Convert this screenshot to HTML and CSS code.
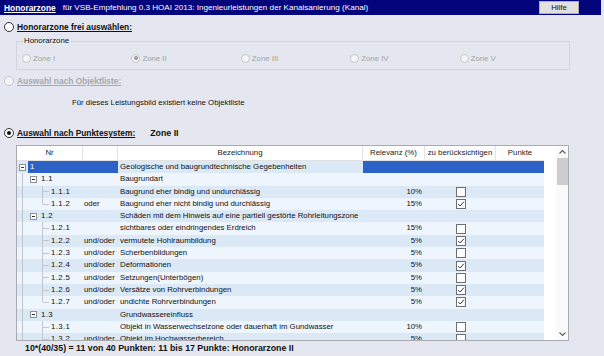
FILE: index.html
```html
<!DOCTYPE html>
<html lang="de">
<head>
    <meta charset="UTF-8">
    <title>Honorarzone</title>
    <link rel="stylesheet" href="styles.css">
</head>
<body>

<div class="titlebar">
    <span class="tb-title">Honorarzone</span>
    <span class="tb-sub">für VSB-Empfehlung 0.3 HOAI 2013: Ingenieurleistungen der Kanalsanierung (Kanal)</span>
    <button class="help">Hilfe</button>
</div>

<div class="opt opt-first">
    <span class="radio"></span>
    <span class="opt-label">Honorarzone frei auswählen:</span>
</div>

<fieldset class="group">
    <legend>Honorarzone</legend>
    <div class="zones">
        <div class="zone"><span class="radio small off"></span>Zone I</div>
        <div class="zone"><span class="radio small off on"></span>Zone II</div>
        <div class="zone"><span class="radio small off"></span>Zone III</div>
        <div class="zone"><span class="radio small off"></span>Zone IV</div>
        <div class="zone"><span class="radio small off"></span>Zone V</div>
    </div>
</fieldset>

<div class="opt opt-second">
    <span class="radio off"></span>
    <span class="opt-label disabled">Auswahl nach Objektliste:</span>
</div>

<p class="note">Für dieses Leistungsbild existiert keine Objektliste</p>

<div class="opt opt-third">
    <span class="radio on"></span>
    <span class="opt-label">Auswahl nach Punktesystem:</span>
    <span class="zone-result">Zone II</span>
</div>

<div class="grid">
    <div class="grid-main">
        <div class="grid-head">
            <div class="cell c-nr">Nr</div>
            <div class="cell c-rel"></div>
            <div class="cell c-bez">Bezeichnung</div>
            <div class="cell c-pct">Relevanz (%)</div>
            <div class="cell c-chk">zu berücksichtigen</div>
            <div class="cell c-pt">Punkte</div>
        </div>
        <div class="grid-body">
            <div class="row sel">
                <div class="c-nr"><span class="tbox first"></span><span class="lbl">1</span></div>
                <div class="c-rel"></div>
                <div class="c-bez">Geologische und baugrundtechnische Gegebenheiten</div>
                <div class="c-pct"></div><div class="c-chk"></div><div class="c-pt"></div>
            </div>
            <div class="row">
                <div class="c-nr"><span class="guide"></span><span class="tbox"></span><span class="lbl">1.1</span></div>
                <div class="c-rel"></div>
                <div class="c-bez">Baugrundart</div>
                <div class="c-pct"></div><div class="c-chk"></div><div class="c-pt"></div>
            </div>
            <div class="row">
                <div class="c-nr"><span class="guide"></span><span class="vline"></span><span class="tick"></span><span class="lbl">1.1.1</span></div>
                <div class="c-rel"></div>
                <div class="c-bez">Baugrund eher bindig und undurchlässig</div>
                <div class="c-pct">10%</div><div class="c-chk"><span class="cb"></span></div><div class="c-pt"></div>
            </div>
            <div class="row">
                <div class="c-nr"><span class="guide"></span><span class="vline last"></span><span class="tick"></span><span class="lbl">1.1.2</span></div>
                <div class="c-rel">oder</div>
                <div class="c-bez">Baugrund eher nicht bindig und durchlässig</div>
                <div class="c-pct">15%</div><div class="c-chk"><span class="cb"><svg viewBox="0 0 8 8"><path d="M1.2 4 L3.2 6 L7 1.6"/></svg></span></div><div class="c-pt"></div>
            </div>
            <div class="row">
                <div class="c-nr"><span class="guide"></span><span class="tbox"></span><span class="lbl">1.2</span></div>
                <div class="c-rel"></div>
                <div class="c-bez">Schäden mit dem Hinweis auf eine partiell gestörte Rohrleitungszone</div>
                <div class="c-pct"></div><div class="c-chk"></div><div class="c-pt"></div>
            </div>
            <div class="row">
                <div class="c-nr"><span class="guide"></span><span class="vline"></span><span class="tick"></span><span class="lbl">1.2.1</span></div>
                <div class="c-rel"></div>
                <div class="c-bez">sichtbares oder eindringendes Erdreich</div>
                <div class="c-pct">15%</div><div class="c-chk"><span class="cb"></span></div><div class="c-pt"></div>
            </div>
            <div class="row">
                <div class="c-nr"><span class="guide"></span><span class="vline"></span><span class="tick"></span><span class="lbl">1.2.2</span></div>
                <div class="c-rel">und/oder</div>
                <div class="c-bez">vermutete Hohlraumbildung</div>
                <div class="c-pct">5%</div><div class="c-chk"><span class="cb"><svg viewBox="0 0 8 8"><path d="M1.2 4 L3.2 6 L7 1.6"/></svg></span></div><div class="c-pt"></div>
            </div>
            <div class="row">
                <div class="c-nr"><span class="guide"></span><span class="vline"></span><span class="tick"></span><span class="lbl">1.2.3</span></div>
                <div class="c-rel">und/oder</div>
                <div class="c-bez">Scherbenbildungen</div>
                <div class="c-pct">5%</div><div class="c-chk"><span class="cb"></span></div><div class="c-pt"></div>
            </div>
            <div class="row">
                <div class="c-nr"><span class="guide"></span><span class="vline"></span><span class="tick"></span><span class="lbl">1.2.4</span></div>
                <div class="c-rel">und/oder</div>
                <div class="c-bez">Deformationen</div>
                <div class="c-pct">5%</div><div class="c-chk"><span class="cb"><svg viewBox="0 0 8 8"><path d="M1.2 4 L3.2 6 L7 1.6"/></svg></span></div><div class="c-pt"></div>
            </div>
            <div class="row">
                <div class="c-nr"><span class="guide"></span><span class="vline"></span><span class="tick"></span><span class="lbl">1.2.5</span></div>
                <div class="c-rel">und/oder</div>
                <div class="c-bez">Setzungen(Unterbögen)</div>
                <div class="c-pct">5%</div><div class="c-chk"><span class="cb"></span></div><div class="c-pt"></div>
            </div>
            <div class="row">
                <div class="c-nr"><span class="guide"></span><span class="vline"></span><span class="tick"></span><span class="lbl">1.2.6</span></div>
                <div class="c-rel">und/oder</div>
                <div class="c-bez">Versätze von Rohrverbindungen</div>
                <div class="c-pct">5%</div><div class="c-chk"><span class="cb"><svg viewBox="0 0 8 8"><path d="M1.2 4 L3.2 6 L7 1.6"/></svg></span></div><div class="c-pt"></div>
            </div>
            <div class="row">
                <div class="c-nr"><span class="guide"></span><span class="vline last"></span><span class="tick"></span><span class="lbl">1.2.7</span></div>
                <div class="c-rel">und/oder</div>
                <div class="c-bez">undichte Rohrverbindungen</div>
                <div class="c-pct">5%</div><div class="c-chk"><span class="cb"><svg viewBox="0 0 8 8"><path d="M1.2 4 L3.2 6 L7 1.6"/></svg></span></div><div class="c-pt"></div>
            </div>
            <div class="row">
                <div class="c-nr"><span class="guide"></span><span class="tbox"></span><span class="lbl">1.3</span></div>
                <div class="c-rel"></div>
                <div class="c-bez">Grundwassereinfluss</div>
                <div class="c-pct"></div><div class="c-chk"></div><div class="c-pt"></div>
            </div>
            <div class="row">
                <div class="c-nr"><span class="guide"></span><span class="vline"></span><span class="tick"></span><span class="lbl">1.3.1</span></div>
                <div class="c-rel"></div>
                <div class="c-bez">Objekt in Wasserwechselzone oder dauerhaft im Gundwasser</div>
                <div class="c-pct">10%</div><div class="c-chk"><span class="cb"></span></div><div class="c-pt"></div>
            </div>
            <div class="row">
                <div class="c-nr"><span class="guide"></span><span class="vline"></span><span class="tick"></span><span class="lbl">1.3.2</span></div>
                <div class="c-rel">und/oder</div>
                <div class="c-bez">Objekt im Hochwasserbereich</div>
                <div class="c-pct">5%</div><div class="c-chk"><span class="cb"></span></div><div class="c-pt"></div>
            </div>
        </div>
    </div>
    <div class="scroll">
        <div class="sb-btn"><svg viewBox="0 0 7 4"><path d="M0.5 3.5 L3.5 0.5 L6.5 3.5"/></svg></div>
        <div class="sb-thumb"></div>
        <div class="sb-track"></div>
        <div class="sb-btn"><svg viewBox="0 0 7 4"><path d="M0.5 0.5 L3.5 3.5 L6.5 0.5"/></svg></div>
    </div>
</div>

<p class="summary">10*(40/35) = 11 von 40 Punkten: 11 bis 17 Punkte: Honorarzone II</p>

</body>
</html>
```

FILE: styles.css
```css
/* Basis */
body {
    margin: 0;
    width: 604px;
    height: 356px;
    overflow: hidden;
    background-color: #e4e7ef;
    font-family: "Liberation Sans", Arial, sans-serif;
    font-size: 7.8px;
    color: #111;
}

/* Titelleiste */
.titlebar {
    display: flex;
    align-items: center;
    width: 601px;
    height: 15px;
    box-sizing: border-box;
    padding-left: 4px;
    background-color: #04047c;
    color: #fff;
}

.tb-title {
    font-weight: bold;
    font-size: 8.4px;
    text-decoration: underline;
}

.tb-sub {
    margin-left: 7px;
    font-size: 8.1px;
}

.help {
    margin-left: auto;
    margin-right: 22px;
    width: 40px;
    height: 13px;
    padding: 0;
    border: 1px solid #adadad;
    background-color: #e1e1e1;
    font-family: inherit;
    font-size: 7.8px;
    color: #111;
}

/* Optionen */
.opt {
    display: flex;
    align-items: center;
    height: 12px;
    padding-left: 4px;
    gap: 3px;
}

.opt-first { margin-top: 6px; }
.opt-second { margin-top: 5px; }
.opt-third { margin-top: 18px; }

.opt-label {
    font-weight: bold;
    font-size: 8.4px;
    text-decoration: underline;
}

.opt-label.disabled {
    color: #a7a9ae;
}

.zone-result {
    margin-left: 12px;
    font-weight: bold;
    font-size: 8.8px;
}

.radio {
    width: 10px;
    height: 10px;
    box-sizing: border-box;
    border: 1px solid #333;
    border-radius: 50%;
    background-color: #fff;
    display: flex;
    align-items: center;
    justify-content: center;
    flex-shrink: 0;
}

.radio.on::after {
    content: "";
    width: 4px;
    height: 4px;
    border-radius: 50%;
    background-color: #111;
}

.radio.off {
    border-color: #c4c6cb;
    background-color: #f4f4f4;
}

.radio.off.on::after {
    background-color: #9a9a9a;
}

.radio.small {
    width: 9px;
    height: 9px;
}

/* Gruppe Honorarzone */
.group {
    margin: 3px 0 0 16px;
    padding: 6px 0 5px 5px;
    width: 554px;
    box-sizing: border-box;
    border: 1px solid #d2d5dd;
    min-width: 0;
}

.group legend {
    margin-left: 1px;
    padding: 0 1px;
    line-height: 10px;
    color: #111;
}

.zones {
    display: flex;
}

.zone {
    display: flex;
    align-items: center;
    gap: 2px;
    width: 109.5px;
    height: 12px;
    color: #a3a3a3;
}

.note {
    margin: 10px 0 0 0;
    padding-left: 72px;
    line-height: 12px;
}

/* Tabelle */
.grid {
    display: flex;
    margin: 6px 0 0 16px;
    width: 553px;
    height: 196px;
    box-sizing: border-box;
    border: 1px solid #a9abb0;
    background-color: #fff;
}

.grid-main {
    width: 527px;
    display: flex;
    flex-direction: column;
    overflow: hidden;
}

.grid-head {
    display: flex;
    height: 15px;
    box-sizing: border-box;
    border-bottom: 1px solid #e2e2e2;
    flex-shrink: 0;
}

.grid-head .cell {
    border-right: 1px solid #e4e4e4;
    text-align: center;
    line-height: 14px;
    color: #222;
}

.grid-head .c-pt {
    border-right: none;
}

.grid-body {
    flex: 1;
    overflow: hidden;
}

.row {
    display: flex;
    height: 12.3px;
    line-height: 12.3px;
    white-space: nowrap;
}

.row:nth-child(odd) { background-color: #dbe8f5; }
.row:nth-child(even) { background-color: #eef5fc; }

.c-nr { width: 66px; }
.c-rel { width: 35px; }
.c-bez { width: 245px; }
.c-pct { width: 62px; }
.c-chk { width: 71px; }
.c-pt { width: 48px; }

.c-nr, .c-rel, .c-bez, .c-pct, .c-chk, .c-pt {
    box-sizing: border-box;
    flex-shrink: 0;
    overflow: hidden;
}

.row .c-nr {
    display: flex;
}

.row .c-rel { padding-left: 1px; }
.row .c-bez { padding-left: 2px; }

.row .c-pct {
    text-align: right;
    padding-right: 3px;
}

.row .c-chk {
    display: flex;
    align-items: center;
    justify-content: center;
}

/* Baumlinien */
.guide {
    width: 6px;
    box-sizing: border-box;
    border-right: 1px solid #c2c6cc;
    flex-shrink: 0;
}

.vline {
    width: 20px;
    box-sizing: border-box;
    border-right: 1px solid #c2c6cc;
    flex-shrink: 0;
}

.vline.last {
    height: 6px;
}

.tick {
    width: 6px;
    height: 0;
    align-self: center;
    border-top: 1px solid #c2c6cc;
    flex-shrink: 0;
}

.tbox {
    width: 7px;
    height: 7px;
    box-sizing: border-box;
    margin-left: 7px;
    align-self: center;
    border: 1px solid #8e9297;
    background-color: #fff;
    display: flex;
    align-items: center;
    justify-content: center;
    flex-shrink: 0;
}

.tbox.first {
    margin-left: 2px;
}

.tbox::after {
    content: "";
    width: 3px;
    height: 1px;
    background-color: #333;
}

.lbl {
    flex: 1;
    margin-left: 2px;
    padding-left: 2px;
    letter-spacing: 0.4px;
}

.tick + .lbl {
    margin-left: 0;
}

/* Auswahl */
.row.sel .lbl,
.row.sel .c-rel,
.row.sel .c-pct,
.row.sel .c-chk,
.row.sel .c-pt {
    background-color: #2c62c5;
    color: #fff;
}

/* Checkbox */
.cb {
    width: 10px;
    height: 10px;
    box-sizing: border-box;
    border: 1px solid #6b6e73;
    background-color: #fff;
    display: flex;
}

.cb svg {
    width: 8px;
    height: 8px;
}

.cb path {
    fill: none;
    stroke: #3a3a3a;
    stroke-width: 1;
}

/* Scrollbar */
.scroll {
    width: 12px;
    margin-left: auto;
    display: flex;
    flex-direction: column;
    background-color: #fafafa;
}

.sb-btn {
    height: 12px;
    display: flex;
    align-items: center;
    justify-content: center;
    flex-shrink: 0;
}

.sb-btn svg {
    width: 7px;
    height: 4px;
}

.sb-btn path {
    fill: none;
    stroke: #606060;
    stroke-width: 1.1;
}

.sb-thumb {
    height: 27px;
    margin-left: 1px;
    background-color: #cdcdcd;
}

.sb-track {
    flex: 1;
}

.summary {
    margin: 1px 0 0 0;
    padding-left: 25px;
    line-height: 12px;
    font-weight: bold;
    font-size: 8.8px;
}
```
